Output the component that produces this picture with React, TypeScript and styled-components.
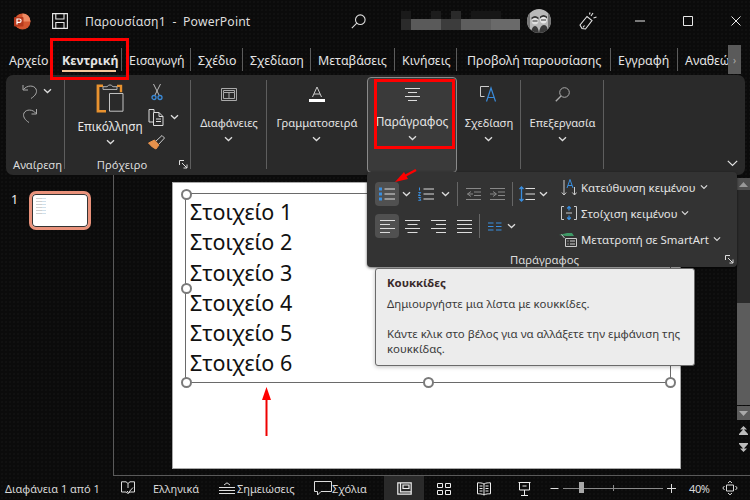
import React from "react";
import styled, { createGlobalStyle } from "styled-components";

const Global = createGlobalStyle`
  html, body { margin: 0; padding: 0; width: 750px; height: 500px; overflow: hidden; background: #0b0b0b; }
  * { box-sizing: border-box; }
`;
const FONT = `"Noto Sans", "Open Sans", sans-serif`;

const Page = styled.div`
  position: relative; width: 750px; height: 500px; background-color: #0b0b0b; color: #e8e8e8;
  background-image: radial-gradient(#171717 .6px, transparent .8px); background-size: 4px 4px;
  font-family: ${FONT}; display: flex; flex-direction: column; overflow: hidden;
`;
const TitleBar = styled.div`
  height: 42px; display: flex; align-items: center; padding-left: 14px; flex: none;
`;
const Title = styled.div`
  margin-left: 17px; width: 266px; font-size: 12.2px; color: #dedede; white-space: pre; letter-spacing: .15px;
`;
const TitleIcon = styled.svg<{ $ml?: number }>`
  flex: none; margin-left: ${p => p.$ml ?? 0}px; display: block;
`;
const TabBar = styled.div`
  height: 33px; display: flex; align-items: center; flex: none; padding-left: 9px; position: relative;
`;
const Tab = styled.div<{ $w: number; $active?: boolean; $sep?: boolean; $pl?: number }>`
  position: relative; width: ${p => p.$w}px; height: 33px; line-height: 37px; font-size: 12.4px; white-space: nowrap;
  padding-left: ${p => p.$pl ?? 0}px;
  color: #e4e4e4; font-weight: ${p => (p.$active ? 700 : 400)};
  ${p => p.$active ? `&::after{content:"";position:absolute;left:0;width:54px;top:28px;height:2px;background:#f4c79a;}` : ""}
  ${p => p.$sep ? `&::before{content:"";position:absolute;right:7px;top:6px;height:23px;width:1px;background:#5c5c5c;}` : ""}
`;
const TabScroll = styled.div`
  position: absolute; left: 728px; top: 3px; width: 13px; height: 29px; background: #5a5a5a; color: #aaa;
  display: flex; align-items: center; justify-content: center; font-size: 10px;
`;
const Ribbon = styled.div`
  flex: none; height: 100px; margin: 0 5px 0 6px; background: #2a2a2a; border-radius: 7px;
  display: flex; position: relative;
`;
const Group = styled.div<{ $w: number; $sep?: boolean; $open?: boolean }>`
  position: relative; width: ${p => p.$w}px; flex: none; height: 100%;
  display: flex; flex-direction: column; align-items: center;
  ${p => p.$sep ? `&::after{content:"";position:absolute;right:0;top:5px;height:89px;width:1px;background:#5e5e5e;}` : ""}
  ${p => p.$open ? `background:#3a3a3a;border:1px solid #8a8a8a;border-radius:4px;margin-top:2px;height:96px;` : ""}
`;
const GroupLabel = styled.div<{ $pl?: number; $pr?: number }>`
  position: absolute; bottom: 3px; left: 0; right: 0; text-align: center; font-size: 11.2px; color: #dcdcdc; white-space: nowrap;
  padding-left: ${p => p.$pl ?? 0}px; padding-right: ${p => p.$pr ?? 0}px;
`;
const BigButton = styled.div<{ $top: number }>`
  padding-top: ${p => p.$top}px; display: flex; flex-direction: column; align-items: center; gap: 6px;
  font-size: 11.2px; color: #e4e4e4; white-space: nowrap; line-height: 15px;
`;
const BigLabel = styled.span<{ $mt: number; $size?: number }>`
  margin-top: ${p => p.$mt}px; font-size: ${p => p.$size ?? 11.2}px; white-space: nowrap;
`;
const Chevron = styled.svg`display: block; flex: none;`;
const ClipGrid = styled.div`
  display: flex; width: 100%; padding: 5px 0 0 8px;
`;
const PasteCol = styled.div`
  width: 74px; display: flex; flex-direction: column; align-items: center; gap: 5px; font-size: 11.8px; line-height: 15px; padding-top: 4px;
`;
const PasteIcon = styled.svg`display: block;`;
const SmallCol = styled.div`
  display: flex; flex-direction: column; gap: 1px; padding: 0 0 0 1px;
`;
const SmallRow = styled.div<{ $gap?: number; $ml?: number }>`
  display: flex; align-items: center; gap: ${p => p.$gap ?? 5}px; height: 24px; margin-left: ${p => p.$ml ?? 0}px;
`;
const UndoCol = styled.div`
  display: flex; flex-direction: column; width: 100%; padding: 4px 0 0 16px; gap: 1px;
`;
const Workspace = styled.div`flex: 1; display: flex; min-height: 0;`;
const ThumbPane = styled.div`
  width: 114px; flex: none; border-right: 1px solid #5a5a5a; display: flex; align-items: flex-start; padding: 16px 0 0 11px; gap: 11px;
  font-size: 12.5px; color: #eee;
`;
const Thumb = styled.div`
  width: 62px; height: 39px; border: 3px solid #e9927b; border-radius: 7px; background: #fff; box-shadow: inset 0 0 0 1px #333;
  padding: 4px 0 0 4px; display: flex; flex-direction: column; gap: 2px;
`;
const ThumbLine = styled.div`width: 10px; height: 1px; background: linear-gradient(90deg,#d0d0d0 60%,#cfe0ec 60%);`;
const Stage = styled.div`
  flex: 1; border-bottom: 1px solid #5a5a5a; padding: 7px 0 0 58px; min-width: 0; display: flex; align-items: flex-start;
`;
const Slide = styled.div`
  width: 509px; height: 287px; background: #fff; border: 1px solid #a8a8a8; padding: 10px 0 0 12px; flex: none;
`;
const TextBox = styled.div`
  position: relative; width: 486px; height: 190px; border: 1px solid #6a6a6a; padding: 3px 0 0 4px;
  color: #111; font-size: 21.5px; line-height: 30.3px;
`;
const Handle = styled.span<{ $x: string; $y: string }>`
  position: absolute; left: ${p => p.$x}; top: ${p => p.$y}; width: 11px; height: 11px; margin: -5.5px 0 0 -5.5px;
  border-radius: 50%; background: #fff; border: 2px solid #7a7a7a;
`;
const VScroll = styled.div`
  position: absolute; left: 737px; top: 178px; width: 13px; height: 285px; display: flex; flex-direction: column; align-items: center;
`;
const VTrack = styled.div`width: 100%; height: 113px; background: #2b2b2b; flex: none;`;
const VThumb = styled.div`width: 100%; height: 102px; background: #5c5c5c; flex: none;`;
const VBtn = styled.div<{ $top?: boolean }>`
  width: 100%; height: ${p => (p.$top ? 12 : 14)}px; margin-top: ${p => (p.$top ? 0 : 1)}px; background: ${p => (p.$top ? "#505050" : "#5c5c5c")};
  display: flex; align-items: center; justify-content: center; flex: none;
`;
const StepIcon = styled.svg<{ $mt: number }>`display: block; flex: none; margin-top: ${p => p.$mt}px;`;
const StatusBar = styled.div`
  height: 24px; flex: none; display: flex; align-items: center; font-size: 11px; color: #d8d8d8; padding-left: 5px; white-space: nowrap;
`;
const StatusText = styled.span<{ $w: number; $ml?: number; $ls?: number }>`
  width: ${p => p.$w}px; flex: none; margin-left: ${p => p.$ml ?? 0}px; letter-spacing: ${p => p.$ls ?? 0}px;
`;
const StatusIcon = styled.svg<{ $w: number }>`flex: none; display: block; margin: 0 ${p => p.$w}px 0 0;`;
const ViewBtn = styled.div<{ $on?: boolean }>`
  width: 40px; height: 24px; padding-top: 1px; flex: none; display: flex; align-items: center; justify-content: center; background: ${p => p.$on ? "#2a2a2a" : "transparent"};
`;
const MinusGap = styled.div`width: 6px; flex: none;`;
const Zoomer = styled.div`
  position: relative; width: 100px; height: 1px; background: #8a8a8a; margin: 0 4px 0 4px; flex: none;
  &::before{content:"";position:absolute;left:16px;top:-6px;width:5px;height:11px;background:#a8a8a8;}
  &::after{content:"";position:absolute;left:50px;top:-3px;width:1px;height:6px;background:#8a8a8a;}
`;
const Pop = styled.div`
  position: absolute; left: 367px; top: 172px; width: 370px; height: 95px; background: #333; border-radius: 4px;
  box-shadow: 0 1px 3px rgba(0,0,0,.6); display: grid; grid-template-columns: 186px 1fr; padding: 10px 0 0 8px;
`;
const PopLeft = styled.div`display: flex; flex-direction: column; gap: 3px;`;
const PopRow = styled.div<{ $mt?: number }>`display: flex; align-items: center; height: 24px; margin-top: ${p => p.$mt ?? 0}px;`;
const IconBtn = styled.div<{ $w: number; $on?: boolean; $ml?: number }>`
  width: ${p => p.$w}px; height: 24px; display: flex; align-items: center; justify-content: center; flex: none; border-radius: 4px;
  margin-left: ${p => p.$ml ?? 0}px;
  background: ${p => (p.$on ? "#505050" : "transparent")};
`;
const VSep = styled.div<{ $ml?: number; $mr?: number }>`
  width: 1px; height: 24px; background: #666; flex: none; margin: 0 ${p => p.$mr ?? 5}px 0 ${p => p.$ml ?? 5}px;
`;
const PopRight = styled.div`display: flex; flex-direction: column; gap: 4px; margin-top: -6px;`;
const CmdRow = styled.div<{ $ml?: number }>`
  display: flex; align-items: center; gap: 4px; height: 22px; font-size: 11.4px; color: #e4e4e4; white-space: nowrap; margin-left: ${p => p.$ml ?? 0}px;
`;
const PopLabel = styled.div`
  position: absolute; left: 0; right: 0; bottom: 0; padding-right: 15px; text-align: center; font-size: 11.3px; line-height: 15px; color: #dcdcdc;
`;
const Launcher = styled.svg<{ $r: number; $b: number }>`
  position: absolute; right: ${p => p.$r}px; bottom: ${p => p.$b}px;
`;
const Tip = styled.div`
  position: absolute; left: 375px; top: 268px; width: 320px; height: 98px; background: #ececec; border: 1px solid #6a6a6a; border-radius: 3px;
  padding: 6px 11px; color: #3a3a3a; font-size: 11.4px; line-height: 15px; box-shadow: 0 1px 4px rgba(0,0,0,.25);
`;
const TipTitle = styled.div`font-weight: 700; color: #3a2a2a; margin-bottom: 6px;`;
const TipText = styled.p`margin: 0 0 15px 0; &:last-child{margin:0;} `;
const RedBox = styled.div<{ $x: number; $y: number; $w: number; $h: number }>`
  position: absolute; left: ${p => p.$x}px; top: ${p => p.$y}px; width: ${p => p.$w}px; height: ${p => p.$h}px; border: 3px solid #f00; pointer-events: none;
`;
const Overlay = styled.svg`position: absolute; left: 0; top: 0; pointer-events: none;`;
const IcSvg = styled.svg`display: block; flex: none;`;

const Chev = ({ c = "#ddd", s = 9 }: { c?: string; s?: number }) => (
  <Chevron width={s} height={6} viewBox="0 0 9 6"><path d="M1 1.2 4.5 4.5 8 1.2" fill="none" stroke={c} strokeWidth="1.3" /></Chevron>
);
const Ic = ({ w, h, children }: { w: number; h: number; children: React.ReactNode }) => (
  <IcSvg width={w} height={h} viewBox={`0 0 ${w} ${h}`} fill="none" stroke="#ddd" strokeWidth="1">{children}</IcSvg>
);
const Launch = ({ r, b }: { r: number; b: number }) => (
  <Launcher $r={r} $b={b} width={9} height={9} viewBox="0 0 9 9" fill="none" stroke="#ddd">
    <path d="M.5 5V.5H5M3 3l5 5M8 4.5V8H4.5" />
  </Launcher>
);

const tabs: { t: string; w: number; sep?: boolean; pl?: number }[] = [
  { t: "Αρχείο", w: 53 },
  { t: "Κεντρική", w: 67, sep: true },
  { t: "Εισαγωγή", w: 69, sep: true },
  { t: "Σχέδιο", w: 52, sep: true },
  { t: "Σχεδίαση", w: 68, sep: true },
  { t: "Μεταβάσεις", w: 84, sep: true },
  { t: "Κινήσεις", w: 62, sep: true },
  { t: "Προβολή παρουσίασης", w: 154, sep: true, pl: 3 },
  { t: "Εγγραφή", w: 67, sep: true },
  { t: "Αναθεώ", w: 43 },
];

export default function App() {
  return (
    <Page>
      <Global />
      <TitleBar>
        <TitleIcon width="17" height="17" viewBox="0 0 17 17">
          <circle cx="8.5" cy="8.5" r="8" fill="#d4562f" />
          <path d="M8.5.5a8 8 0 0 1 8 8h-8z" fill="#ef8a63" />
          <rect x="0" y="4" width="9.5" height="9.5" rx="1" fill="#b7391c" />
          <path d="M3 11.5V6h2.4a1.7 1.7 0 0 1 0 3.4H3" fill="none" stroke="#fff" strokeWidth="1.2" />
        </TitleIcon>
        <TitleIcon $ml={21} width="16" height="16" viewBox="0 0 16 16" fill="none" stroke="#e8e8e8" strokeWidth="1.1">
          <path d="M.6.6H15.4V15.4H.6zM3.8.8V6H12V.8M3.8 15.2V9.5H12V15.2" />
        </TitleIcon>
        <Title>Παρουσίαση1  -  PowerPoint</Title>
        <TitleIcon width="15" height="15" viewBox="0 0 15 15" fill="none" stroke="#ddd" strokeWidth="1.1">
          <circle cx="9.3" cy="5.7" r="4.8" /><path d="M5.8 9.2.8 14.2" />
        </TitleIcon>
        <TitleIcon $ml={35} width="119" height="20" viewBox="0 0 119 20">
          <rect x="0" y="0" width="10" height="8" fill="#1a1a1a" /><rect x="30" y="0" width="10" height="8" fill="#1c1c1c" /><rect x="50" y="0" width="10" height="8" fill="#2a2a2a" />
          <rect x="70" y="0" width="30" height="8" fill="#161616" /><rect x="0" y="8" width="10" height="11" fill="#2b2b2b" />
          <rect x="10" y="8" width="30" height="11" fill="#5a5a5a" /><rect x="40" y="8" width="20" height="11" fill="#3c3c3c" />
          <rect x="60" y="8" width="30" height="11" fill="#5e5e5e" /><rect x="90" y="8" width="29" height="11" fill="#6a6a6a" />
        </TitleIcon>
        <TitleIcon $ml={7} width="24" height="24" viewBox="0 0 24 24">
          <clipPath id="av"><circle cx="12" cy="12" r="12" /></clipPath>
          <g clipPath="url(#av)">
            <rect width="24" height="24" fill="#b8b8b8" />
            <path d="M0 24V4h3v20zM21 0h3v24h-3z" fill="#777" />
            <circle cx="8" cy="12" r="3.400" fill="#dedede" /><path d="M4.500 10.500q3.500-3.500 7 0v-2q-3.500-3-7 0z" fill="#333" />
            <circle cx="16.500" cy="11" r="3.400" fill="#e8e8e8" /><path d="M13 9.500q3.500-3.500 7 0v-2q-3.500-3-7 0z" fill="#333" />
            <path d="M5.500 12h5M14 11h5" stroke="#333" />
            <path d="M4 24q1-7 4-7t4 7zM12 24q1-8 5-8t4 8z" fill="#3a3a3a" />
          </g>
        </TitleIcon>
        <TitleIcon $ml={28} width="18" height="18" viewBox="0 0 18 18" fill="none" stroke="#e4e4e4" strokeWidth="1.1">
          <path d="M1 13 8 4.500l5 4-6.500 8.500-3.500-.5zM4 15.500l1.500-2M12 4l2-3M14.500 6l3-1M10.500 2.500l.5-2" />
        </TitleIcon>
        <TitleIcon $ml={38} width="10" height="2" viewBox="0 0 10 2"><path d="M0 1h10" stroke="#e8e8e8" /></TitleIcon>
        <TitleIcon $ml={38} width="10" height="10" viewBox="0 0 10 10"><path d="M.5.5h9v9h-9z" fill="none" stroke="#e8e8e8" /></TitleIcon>
        <TitleIcon $ml={38} width="10" height="10" viewBox="0 0 10 10"><path d="M.5.5l9 9M9.5.5l-9 9" fill="none" stroke="#e8e8e8" /></TitleIcon>
      </TitleBar>

      <TabBar>
        {tabs.map((tab, i) => (
          <Tab key={tab.t} $w={tab.w} $pl={tab.pl} $active={i === 1} $sep={tab.sep}>{tab.t}</Tab>
        ))}
        <TabScroll>›</TabScroll>
      </TabBar>

      <Ribbon>
        <Group $w={59} $sep>
          <UndoCol>
            <SmallRow>
              <Ic w={16} h={18}><path d="M1 3v5h5M1.500 7.500C5 3 12 3 14 7c1.500 3.500-.5 6.500-5 9.500" stroke="#aaa" /></Ic>
              <Chev />
            </SmallRow>
            <SmallRow>
              <Ic w={16} h={18}><path d="M14.500 2v5H9.500M14 6.500C11 2 4 2 2 6c-1.500 3.500 1 7 5 9.500" stroke="#aaa" /></Ic>
            </SmallRow>
          </UndoCol>
          <GroupLabel $pl={4}>Αναίρεση</GroupLabel>
        </Group>
        <Group $w={126} $sep>
          <ClipGrid>
            <PasteCol>
              <PasteIcon width="28" height="29" viewBox="0 0 28 32" fill="none" preserveAspectRatio="none">
                <path d="M7 2H2v28h8" stroke="#e8922f" strokeWidth="2.800" />
                <path d="M21 2h4v7" stroke="#e8922f" strokeWidth="2.400" />
                <path d="M7 6V3h4q3-4 6 0h4v3z" fill="#2a2a2a" stroke="#bbb" strokeWidth="1" />
                <path d="M13.500 10.500H27V30H13.500z" fill="#2a2a2a" stroke="#ccc" />
              </PasteIcon>
              <BigLabel $mt={1} $size={11.8}>Επικόλληση</BigLabel>
              <Chev />
            </PasteCol>
            <SmallCol>
              <SmallRow $ml={3}>
                <Ic w={12} h={18}>
                  <path d="M2.500 1 8 12M9.500 1 4 12" stroke="#bbb" />
                  <circle cx="3" cy="14.500" r="2" stroke="#3a8ad8" strokeWidth="1.300" /><circle cx="9" cy="14.500" r="2" stroke="#3a8ad8" strokeWidth="1.300" />
                </Ic>
              </SmallRow>
              <SmallRow $gap={6}>
                <Ic w={16} h={17}>
                  <path d="M6 3V.5H1V13h4" /><path d="M5.500 3.500H11l4 4v9H5.500z" /><path d="M11 3.500V7.500h4M8 10h5M8 12.500h5" />
                </Ic>
                <Chev />
              </SmallRow>
              <SmallRow>
                <Ic w={17} h={16}>
                  <path d="M8 7 14 1.500l2.500 2.500-5.500 6" stroke="#ccc" />
                  <path d="M.5 9 6.500 6l4.500 5-3 4q-3.500-1-7.500-6z" fill="#e8924c" stroke="#e8924c" />
                </Ic>
              </SmallRow>
            </SmallCol>
          </ClipGrid>
          <GroupLabel $pr={12}>Πρόχειρο</GroupLabel>
          <Launch r={3} b={6} />
        </Group>
        <Group $w={76} $sep>
          <BigButton $top={13}>
            <Ic w={16} h={13}><path d="M.5.5h15v12H.5zM2.500 2.500h11v2h-11zM2.500 4.500v6h11v-6M8 4.500v6" stroke="#aaa" /></Ic>
            <BigLabel $mt={8}>Διαφάνειες</BigLabel>
            <Chev />
          </BigButton>
        </Group>
        <Group $w={100}>
          <BigButton $top={11}>
            <IcSvg width="16" height="16" viewBox="0 0 16 16">
              <path d="M3.500 11 8 1l4.500 10M5 8h6" fill="none" stroke="#ccc" />
              <rect x="0" y="13" width="16" height="3" fill="#fff" />
            </IcSvg>
            <BigLabel $mt={7}>Γραμματοσειρά</BigLabel>
            <Chev />
          </BigButton>
        </Group>
        <Group $w={90} $open>
          <BigButton $top={10}>
            <Ic w={15} h={14}><path d="M0 .5h15M3 4.500h9M0 8.500h15M3 12.500h9" /></Ic>
            <BigLabel $mt={6} $size={11.9}>Παράγραφος</BigLabel>
            <Chev />
          </BigButton>
        </Group>
        <Group $w={64} $sep>
          <BigButton $top={11}>
            <IcSvg width="17" height="16" viewBox="0 0 17 16" fill="none">
              <path d="M9 .5H.5v10h4" stroke="#ccc" />
              <path d="M6.500 15.500 11 2l4.500 13.500M8 11.500h6" stroke="#3a8ad8" strokeWidth="1.200" />
            </IcSvg>
            <BigLabel $mt={7}>Σχεδίαση</BigLabel>
            <Chev />
          </BigButton>
        </Group>
        <Group $w={83} $sep>
          <BigButton $top={12}>
            <Ic w={15} h={15}><circle cx="9.500" cy="5.500" r="4.800" stroke="#aaa" /><path d="M6 9 .8 14.200" stroke="#aaa" strokeWidth="1.300" /></Ic>
            <BigLabel $mt={7}>Επεξεργασία</BigLabel>
            <Chev />
          </BigButton>
        </Group>
        <Launcher $r={7} $b={8} width={11} height={7} viewBox="0 0 11 7"><path d="M.8.8 5.500 5.500 10.200.8" fill="none" stroke="#e4e4e4" strokeWidth="1.200" /></Launcher>
      </Ribbon>

      <Workspace>
        <ThumbPane>
          <span>1</span>
          <Thumb>{[0, 1, 2, 3, 4, 5].map(i => <ThumbLine key={i} />)}</Thumb>
        </ThumbPane>
        <Stage>
          <Slide>
            <TextBox>
              {[1, 2, 3, 4, 5, 6].map(n => <div key={n}>Στοιχείο {n}</div>)}
              <Handle $x="0" $y="0" />
              <Handle $x="0" $y="50%" />
              <Handle $x="0" $y="100%" />
              <Handle $x="50%" $y="100%" />
              <Handle $x="100%" $y="100%" />
            </TextBox>
          </Slide>
        </Stage>
      </Workspace>

      <VScroll>
        <VBtn $top><svg width="9" height="5" viewBox="0 0 9 5"><path d="M0 5 4.500 0 9 5z" fill="#999" /></svg></VBtn>
        <VTrack />
        <VThumb />
        <VBtn><svg width="9" height="5" viewBox="0 0 9 5"><path d="M0 0 4.500 5 9 0z" fill="#aaa" /></svg></VBtn>
        <StepIcon $mt={6} width="9" height="9" viewBox="0 0 9 9"><path d="M4.500 0 8 3.500H1zM4.500 3 9 8H0z" fill="#bbb" /><path d="M0 8.500h9" stroke="#bbb" /></StepIcon>
        <StepIcon $mt={8} width="9" height="9" viewBox="0 0 9 9"><path d="M0 .5h9" stroke="#bbb" /><path d="M0 1 4.500 6 9 1zM1 5.500 4.500 9 8 5.500z" fill="#bbb" /></StepIcon>
      </VScroll>

      <StatusBar>
        <StatusText $w={116}>Διαφάνεια 1 από 1</StatusText>
        <StatusIcon $w={18} width="14" height="14" viewBox="0 0 14 14" fill="none" stroke="#ddd"><path d="M7 2.500 5 .8H.5V11H5l2 1.500L9 11h4.500V.8H9zM7 2.500V7M6 10l1.500 1.500L12 6.500" /></StatusIcon>
        <StatusText $w={66}>Ελληνικά</StatusText>
        <StatusIcon $w={2} width="16" height="13" viewBox="0 0 16 13" fill="none" stroke="#ddd"><path d="M5 3 8 .8 11 3M0 5.500h16M0 8.500h16M0 11.500h16" /></StatusIcon>
        <StatusText $w={77}>Σημειώσεις</StatusText>
        <StatusIcon $w={0} width="18" height="15" viewBox="0 0 18 15" fill="none" stroke="#ddd"><path d="M.5.5h17v10H7l-3.500 3.500V10.500H.5z" /></StatusIcon>
        <StatusText $w={52}>Σχόλια</StatusText>
        <ViewBtn $on><Ic w={15} h={13}><path d="M.8.8h13.400v11.400H.8zM3.500.8v9h10.700M6 3h6v3.500H6z" stroke="#eee" strokeWidth="1.200" /></Ic></ViewBtn>
        <ViewBtn><Ic w={14} h={12}><path d="M.5.5h5v4h-5zM8.500.5h5v4h-5zM.5 7.500h5v4h-5zM8.500 7.500h5v4h-5z" stroke="#eee" /></Ic></ViewBtn>
        <ViewBtn><Ic w={14} h={14}><path d="M7 2C5 .8 3 .8.500.8v11c2.500 0 4.500 0 6.500 1.200 2-1.200 4-1.200 6.500-1.200V.8C11 .8 9 .8 7 2zM7 2v11M2.500 4h3M2.500 6.500h3M2.500 9h3M8.500 4h3M8.500 6.500h3M8.500 9h3" stroke="#eee" /></Ic></ViewBtn>
        <ViewBtn><Ic w={13} h={14}><path d="M.5.5h12M1.500.5v7.500h10V.5M6.500 8v5M3 13.500h7M4.500 4h4" stroke="#eee" /></Ic></ViewBtn>
        <MinusGap />
        <Ic w={9} h={9}><path d="M.5 4.500h8" stroke="#ddd" /></Ic>
        <Zoomer />
        <Ic w={9} h={9}><path d="M0 4.500h9M4.500 0v9" stroke="#ddd" /></Ic>
        <StatusText $w={33} $ml={13} $ls={-0.4}>40%</StatusText>
        <Ic w={16} h={16}><path d="M4.500 5h7v6h-7zM2.500 6 .8 8l1.700 2M13.500 6l1.700 2-1.700 2M6 3 8 1.200 10 3M6 13l2 1.800 2-1.800" stroke="#ddd" /></Ic>
      </StatusBar>

      <Pop>
        <PopLeft>
          <PopRow>
            <IconBtn $w={24} $on>
              <Ic w={16} h={14}><path d="M5.500 2h11M5.500 7h11M5.500 12h11" /><path d="M0 .5h3v3H0zM0 5.500h3v3H0zM0 10.500h3v3H0z" fill="#3a8fe0" stroke="none" /></Ic>
            </IconBtn>
            <IconBtn $w={14}><Chev /></IconBtn>
            <IconBtn $w={22} $ml={2}>
              <Ic w={16} h={14}><path d="M5.500 2h11M5.500 7h11M5.500 12h11" /><path d="M1.500 .5v3M.3 5.500h2.400l-2.400 3h2.500M.3 10.500h2.500l-1 1.200 1 1.600H.3" stroke="#3a8fe0" /></Ic>
            </IconBtn>
            <IconBtn $w={16}><Chev /></IconBtn>
            <VSep $ml={4} />
            <IconBtn $w={20}>
              <Ic w={15} h={12}><path d="M0 .5h15M8 4h7M8 7.500h7M0 11.500h15M5 3.500 1.500 6 5 8.500M1.500 6H7" stroke="#888" /></Ic>
            </IconBtn>
            <IconBtn $w={4} />
            <IconBtn $w={20}>
              <Ic w={15} h={12}><path d="M0 .5h15M8 4h7M8 7.500h7M0 11.500h15M3 3.500 6.500 6 3 8.500M0 6h6" stroke="#888" /></Ic>
            </IconBtn>
            <VSep />
            <IconBtn $w={18}>
              <Ic w={16} h={16}><path d="M6.500 2.500h9.500M6.500 8h9.500M6.500 13.500h9.500" /><path d="M2.500 1v14M.5 3 2.500 1l2 2M.5 13l2 2 2-2" stroke="#3a8fe0" strokeWidth="1.300" /></Ic>
            </IconBtn>
            <IconBtn $w={14}><Chev /></IconBtn>
          </PopRow>
          <PopRow $mt={5}>
            <IconBtn $w={24} $on><Ic w={15} h={13}><path d="M0 .5h15M0 4.500h10M0 8.500h15M0 12.500h10" /></Ic></IconBtn>
            <IconBtn $w={26}><Ic w={15} h={13}><path d="M0 .5h15M2.500 4.500h10M0 8.500h15M2.500 12.500h10" /></Ic></IconBtn>
            <IconBtn $w={26}><Ic w={15} h={13}><path d="M0 .5h15M5 4.500h10M0 8.500h15M5 12.500h10" /></Ic></IconBtn>
            <IconBtn $w={26}><Ic w={15} h={13}><path d="M0 .5h15M0 4.500h15M0 8.500h15M0 12.500h15" /></Ic></IconBtn>
            <VSep $ml={2} $mr={7} />
            <IconBtn $w={16}><Ic w={14} h={9}><path d="M0 1h5.500M0 4.500h5.500M0 8h5.500M8 1h5.500M8 4.500h5.500M8 8h5.500" stroke="#3a8fe0" strokeWidth="1.100" /></Ic></IconBtn>
            <IconBtn $w={16}><Chev /></IconBtn>
          </PopRow>
        </PopLeft>
        <PopRight>
          <CmdRow>
            <Ic w={16} h={18}>
              <path d="M3 2v15M.8 14.500 3 17l2.200-2.500M13.500 9v8M11.300 14.500 13.500 17l2.200-2.500" stroke="#ccc" />
              <path d="M6 10 9 1.500 12 10M7 7.500h4" stroke="#3a8fe0" />
            </Ic>
            <span>Κατεύθυνση κειμένου</span><Chev s={8} />
          </CmdRow>
          <CmdRow>
            <Ic w={16} h={14}>
              <path d="M3 .5H.5v13H3M13 .5h2.500v13H13M5 7h6" stroke="#ccc" />
              <path d="M8 .5v4M6.200 2.500 8 .5l1.800 2M8 9.500v4M6.200 11.500 8 13.500l1.800-2" stroke="#3a8fe0" strokeWidth="1.200" />
            </Ic>
            <span>Στοίχιση κειμένου</span><Chev s={8} />
          </CmdRow>
          <CmdRow $ml={-2}>
            <IcSvg width="18" height="15" viewBox="0 0 18 15">
              <path d="M0 3 8 1h5l2 3H7z" fill="#3f9a67" />
              <path d="M2.500 2.500 5.500 6" stroke="#ccc" />
              <path d="M6.500 6.500h11v8h-11zM8.500 9h1M11 9h5M8.500 12h1M11 12h5" fill="none" stroke="#ccc" />
            </IcSvg>
            <span>Μετατροπή σε SmartArt</span><Chev s={8} />
          </CmdRow>
        </PopRight>
        <PopLabel>Παράγραφος</PopLabel>
        <Launch r={3} b={3} />
      </Pop>

      <Tip>
        <TipTitle>Κουκκίδες</TipTitle>
        <TipText>Δημιουργήστε μια λίστα με κουκκίδες.</TipText>
        <TipText>Κάντε κλικ στο βέλος για να αλλάξετε την εμφάνιση της κουκκίδας.</TipText>
      </Tip>

      <RedBox $x={50} $y={38} $w={79} $h={42} />
      <RedBox $x={374} $y={79} $w={81} $h={70} />
      <Overlay width="750" height="500" viewBox="0 0 750 500">
        <path d="M416 170 L401 178" stroke="#f00" strokeWidth="2.500" />
        <path d="M395 182 L404 172 L408 179z" fill="#f00" />
        <path d="M266.500 436V398" stroke="#e00" strokeWidth="2" />
        <path d="M266.500 387 L262 400 H271z" fill="#f00" />
      </Overlay>
    </Page>
  );
}
